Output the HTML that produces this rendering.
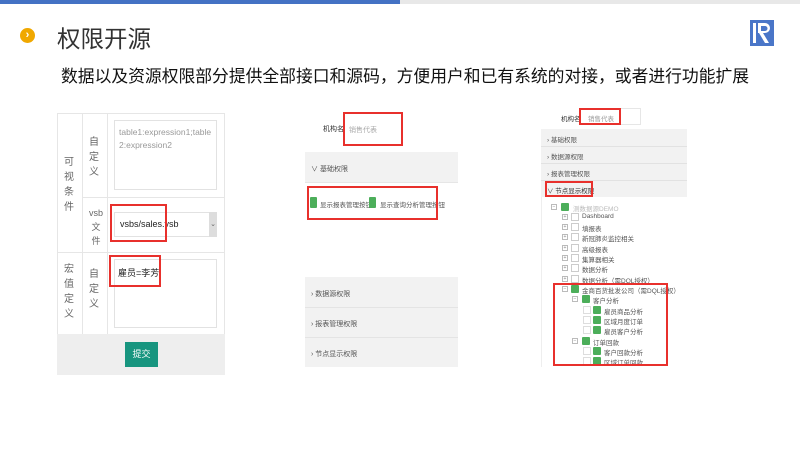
<!DOCTYPE html>
<html><head><meta charset="utf-8"><style>
*{margin:0;padding:0;box-sizing:border-box}
body{width:800px;height:450px;position:relative;background:#fff;font-family:"Liberation Sans","Noto Sans CJK SC",sans-serif;overflow:hidden}
.a{position:absolute}
.red{position:absolute;border:2px solid #e8302c}
.t{position:absolute;font-size:6.5px;color:#555;white-space:nowrap}
.cb{position:absolute;width:8px;height:8px;border:1px solid #ccc;background:#fff}
.cbg{position:absolute;width:8px;height:8px;background:#4cae5a;border-radius:1px}
.pm{position:absolute;width:6px;height:6px;border:1px solid #bbb;font-size:5px;line-height:4px;text-align:center;color:#888}
</style></head><body>
<div class="a" style="left:0;top:0;width:400px;height:4px;background:#4472c4"></div>
<div class="a" style="left:400px;top:0;width:400px;height:4px;background:#e8e8e8"></div>
<div class="a" style="left:20px;top:28px;width:15px;height:15px;border-radius:50%;background:#f0a800;color:#fff;font-size:11px;font-weight:bold;line-height:15px;text-align:center">›</div>
<div class="a" style="left:57px;top:20px;font-size:23.5px;color:#333">权限开源</div>
<svg class="a" style="left:750px;top:20px" width="24" height="26" viewBox="0 0 24 26"><rect width="24" height="26" fill="#4a76c8"/><rect x="3" y="3" width="3" height="20" fill="#fff"/><path d="M8 3h7a5 5 0 0 1 0 10h-2l6 10h-4l-6-10h-1z" fill="#fff"/><path d="M11 6h4a2.5 2.5 0 0 1 0 5h-4z" fill="#4a76c8"/></svg>
<div class="a" style="left:61px;top:63px;font-size:16.8px;color:#111">数据以及资源权限部分提供全部接口和源码，方便用户和已有系统的对接，或者进行功能扩展</div>

<!-- left panel -->
<div class="a" style="left:57px;top:113px;width:168px;height:262px;border:1px solid #e6e6e6"></div>
<div class="a" style="left:82px;top:113px;width:1px;height:221px;background:#e6e6e6"></div>
<div class="a" style="left:107px;top:113px;width:1px;height:221px;background:#e6e6e6"></div>
<div class="a" style="left:82px;top:197px;width:143px;height:1px;background:#e6e6e6"></div>
<div class="a" style="left:57px;top:252px;width:168px;height:1px;background:#e6e6e6"></div>
<div class="a" style="left:57px;top:334px;width:168px;height:41px;background:#eee"></div>
<div class="a" style="left:64px;top:155px;width:12px;font-size:10px;color:#666;line-height:15px">可视条件</div>
<div class="a" style="left:64px;top:262px;width:12px;font-size:10px;color:#666;line-height:15px">宏值定义</div>
<div class="a" style="left:89px;top:135px;width:12px;font-size:10px;color:#666;line-height:15px">自定义</div>
<div class="a" style="left:89px;top:267px;width:12px;font-size:10px;color:#666;line-height:15px">自定义</div>
<div class="a" style="left:89px;top:206px;width:14px;font-size:9px;color:#666;line-height:14px;text-align:center">vsb<br>文<br>件</div>
<div class="a" style="left:114px;top:120px;width:103px;height:70px;border:1px solid #e2e2e2;font-size:8.5px;color:#999;padding:5px 4px;line-height:13px;word-break:break-all">table1:expression1;table2:expression2</div>
<div class="a" style="left:114px;top:212px;width:103px;height:25px;border:1px solid #e2e2e2"></div>
<div class="a" style="left:209px;top:212px;width:8px;height:25px;background:#ddd;font-size:7px;color:#666;text-align:center;line-height:25px">⌄</div>
<div class="a" style="left:120px;top:219px;font-size:9px;color:#222">vsbs/sales.vsb</div>
<div class="red" style="left:110px;top:204px;width:57px;height:38px"></div>
<div class="a" style="left:114px;top:259px;width:103px;height:69px;border:1px solid #e2e2e2"></div>
<div class="a" style="left:118px;top:266px;font-size:9px;color:#222">雇员=李芳</div>
<div class="red" style="left:109px;top:255px;width:52px;height:32px"></div>
<div class="a" style="left:125px;top:342px;width:33px;height:25px;background:#17957f;color:#fff;font-size:9px;line-height:25px;text-align:center">提交</div>

<!-- middle panel -->
<div class="a" style="left:323px;top:124px;font-size:7px;color:#333">机构名</div>
<div class="a" style="left:349px;top:125px;font-size:7px;color:#aaa">销售代表</div>
<div class="red" style="left:343px;top:112px;width:60px;height:34px"></div>
<div class="a" style="left:305px;top:152px;width:153px;height:31px;background:#f2f2f2;border-bottom:1px solid #e6e6e6"></div>
<div class="a" style="left:311px;top:164px;font-size:7px;color:#555">∨ 基础权限</div>
<div class="cbg" style="left:310px;top:197px;height:11px;width:7px"></div>
<div class="t" style="left:320px;top:199px;font-size:6.5px">显示报表管理按钮</div>
<div class="cbg" style="left:369px;top:197px;height:11px;width:7px"></div>
<div class="t" style="left:380px;top:199px;font-size:6.5px">显示查询分析管理按钮</div>
<div class="red" style="left:307px;top:186px;width:131px;height:34px"></div>
<div class="a" style="left:305px;top:277px;width:153px;height:90px;background:#f2f2f2"></div>
<div class="a" style="left:305px;top:307px;width:153px;height:1px;background:#e4e4e4"></div>
<div class="a" style="left:305px;top:337px;width:153px;height:1px;background:#e4e4e4"></div>
<div class="t" style="left:311px;top:289px;font-size:7px">›  数据源权限</div>
<div class="t" style="left:311px;top:319px;font-size:7px">›  报表管理权限</div>
<div class="t" style="left:311px;top:349px;font-size:7px">›  节点显示权限</div>

<!-- right panel -->
<div class="t" style="left:561px;top:113px;color:#333">机构名</div>
<div class="a" style="left:579px;top:108px;width:62px;height:17px;border:1px solid #e6e6e6"></div>
<div class="t" style="left:588px;top:113px;color:#999">销售代表</div>
<div class="red" style="left:579px;top:108px;width:42px;height:17px"></div>
<div class="a" style="left:541px;top:129px;width:146px;height:68px;background:#f2f2f2"></div>
<div class="a" style="left:541px;top:146px;width:146px;height:1px;background:#e2e2e2"></div>
<div class="a" style="left:541px;top:163px;width:146px;height:1px;background:#e2e2e2"></div>
<div class="a" style="left:541px;top:180px;width:146px;height:1px;background:#e2e2e2"></div>
<div class="t" style="left:547px;top:134px">›  基础权限</div>
<div class="t" style="left:547px;top:151px">›  数据源权限</div>
<div class="t" style="left:547px;top:168px">›  报表管理权限</div>
<div class="t" style="left:547px;top:185px;color:#333">∨  节点显示权限</div>
<div class="red" style="left:545px;top:181px;width:48px;height:16px"></div>
<div class="a" style="left:541px;top:197px;width:1px;height:170px;background:#eee"></div>

<div class="pm" style="left:551px;top:204px">−</div><div class="cbg" style="left:561px;top:203px"></div><div class="t" style="left:573px;top:203px;color:#bbb">测数据源DEMO</div>
<div class="pm" style="left:562px;top:214px">+</div><div class="cb" style="left:571px;top:213px"></div><div class="t" style="left:582px;top:213px">Dashboard</div>
<div class="pm" style="left:562px;top:224px">+</div><div class="cb" style="left:571px;top:223px"></div><div class="t" style="left:582px;top:223px">填报表</div>
<div class="pm" style="left:562px;top:234px">+</div><div class="cb" style="left:571px;top:233px"></div><div class="t" style="left:582px;top:233px">新冠肺炎监控相关</div>
<div class="pm" style="left:562px;top:245px">+</div><div class="cb" style="left:571px;top:244px"></div><div class="t" style="left:582px;top:244px">高级报表</div>
<div class="pm" style="left:562px;top:255px">+</div><div class="cb" style="left:571px;top:254px"></div><div class="t" style="left:582px;top:254px">集算器相关</div>
<div class="pm" style="left:562px;top:265px">+</div><div class="cb" style="left:571px;top:264px"></div><div class="t" style="left:582px;top:264px">数据分析</div>
<div class="pm" style="left:562px;top:276px">+</div><div class="cb" style="left:571px;top:275px"></div><div class="t" style="left:582px;top:275px">数据分析（需DQL授权）</div>
<div class="pm" style="left:562px;top:286px">−</div><div class="cbg" style="left:571px;top:285px"></div><div class="t" style="left:582px;top:285px">金商百货批发公司（需DQL授权）</div>
<div class="pm" style="left:572px;top:296px">−</div><div class="cbg" style="left:582px;top:295px"></div><div class="t" style="left:593px;top:295px">客户分析</div>
<div class="cb" style="left:583px;top:306px;border-color:#ddd"></div><div class="cbg" style="left:593px;top:306px"></div><div class="t" style="left:604px;top:306px">雇员商品分析</div>
<div class="cb" style="left:583px;top:316px;border-color:#ddd"></div><div class="cbg" style="left:593px;top:316px"></div><div class="t" style="left:604px;top:316px">区域月度订单</div>
<div class="cb" style="left:583px;top:326px;border-color:#ddd"></div><div class="cbg" style="left:593px;top:326px"></div><div class="t" style="left:604px;top:326px">雇员客户分析</div>
<div class="pm" style="left:572px;top:338px">−</div><div class="cbg" style="left:582px;top:337px"></div><div class="t" style="left:593px;top:337px">订单回款</div>
<div class="cb" style="left:583px;top:347px;border-color:#ddd"></div><div class="cbg" style="left:593px;top:347px"></div><div class="t" style="left:604px;top:347px">客户回款分析</div>
<div class="cb" style="left:583px;top:357px;border-color:#ddd"></div><div class="cbg" style="left:593px;top:357px"></div><div class="t" style="left:604px;top:357px">区域订单回款</div>
<div class="red" style="left:553px;top:283px;width:115px;height:83px"></div>
</body></html>
